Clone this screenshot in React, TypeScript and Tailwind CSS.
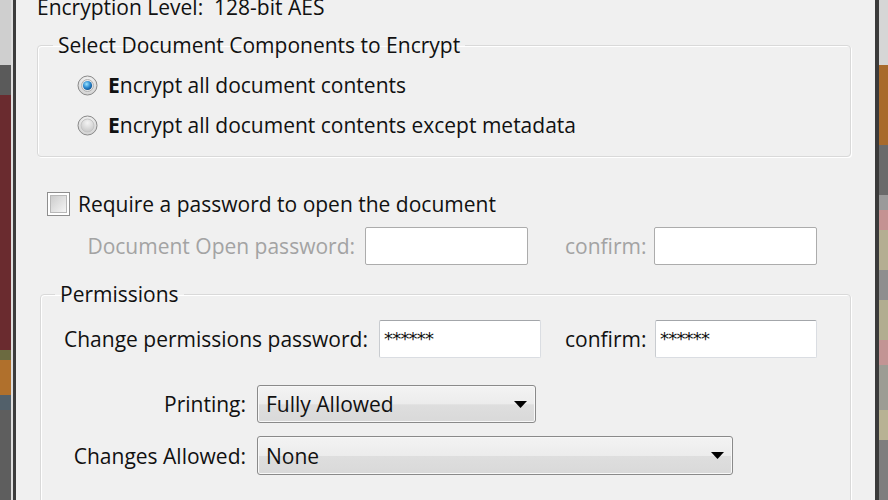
import React from 'react'

const LEFT_STRIP = [
  { h: 65, c: 'bg-[#cfcfcf]' },
  { h: 30, c: 'bg-[#5a5a5a]' },
  { h: 255, c: 'bg-[#6a2b2f]' },
  { h: 10, c: 'bg-[#6b6a40]' },
  { h: 35, c: 'bg-[#b0702c]' },
  { h: 15, c: 'bg-[#52606a]' },
  { h: 90, c: 'bg-[#5e5e5e]' },
]

const RIGHT_STRIP = [
  { h: 65, c: 'bg-[#d6d6d6]' },
  { h: 80, c: 'bg-[#a86a2c]' },
  { h: 50, c: 'bg-[#6a6a6a]' },
  { h: 15, c: 'bg-[#9a9a9a]' },
  { h: 20, c: 'bg-[#c49292]' },
  { h: 40, c: 'bg-[#b4ae92]' },
  { h: 30, c: 'bg-[#8e8e8e]' },
  { h: 40, c: 'bg-[#b2ad90]' },
  { h: 25, c: 'bg-[#c29494]' },
  { h: 45, c: 'bg-[#9c9c94]' },
  { h: 30, c: 'bg-[#b8b294]' },
  { h: 60, c: 'bg-[#7e7e7e]' },
]

function Radio({ checked }: { checked?: boolean }) {
  return (
    <svg width="21" height="21" viewBox="0 0 21 21" className="shrink-0">
      <defs>
        <radialGradient id={checked ? 'rgOn' : 'rgOff'} cx="50%" cy="35%" r="60%">
          <stop offset="0%" stopColor="#ffffff" />
          <stop offset="100%" stopColor="#d4d4d4" />
        </radialGradient>
        <radialGradient id="dot" cx="40%" cy="35%" r="70%">
          <stop offset="0%" stopColor="#9be4ff" />
          <stop offset="55%" stopColor="#2c8ad0" />
          <stop offset="100%" stopColor="#0d4d8a" />
        </radialGradient>
        <radialGradient id="inOff" cx="50%" cy="30%" r="70%">
          <stop offset="0%" stopColor="#f4f4f4" />
          <stop offset="100%" stopColor="#c8c8c8" />
        </radialGradient>
      </defs>
      <circle cx="10.5" cy="10.5" r="9.5" fill={`url(#${checked ? 'rgOn' : 'rgOff'})`} stroke="#8a8a8a" />
      {checked ? (
        <>
          <circle cx="10.5" cy="10.5" r="6" fill="#e8e8e8" stroke="#b0b0b0" />
          <circle cx="10.5" cy="10.5" r="4.6" fill="url(#dot)" />
        </>
      ) : (
        <circle cx="10.5" cy="10.5" r="6.5" fill="url(#inOff)" stroke="#c4c4c4" />
      )}
    </svg>
  )
}

function Checkbox() {
  return (
    <svg width="23" height="24" viewBox="0 0 23 24" className="shrink-0">
      <defs>
        <linearGradient id="cbIn" x1="0" y1="0" x2="1" y2="1">
          <stop offset="0%" stopColor="#cbcbcb" />
          <stop offset="100%" stopColor="#f6f6f6" />
        </linearGradient>
      </defs>
      <rect x="0.5" y="0.5" width="22" height="23" fill="#ffffff" stroke="#8e8e8e" />
      <rect x="3.5" y="3.5" width="16" height="17" fill="url(#cbIn)" stroke="#b8b8b8" />
    </svg>
  )
}

function Arrow() {
  return (
    <svg width="13" height="7" viewBox="0 0 13 7" className="shrink-0">
      <polygon points="0,0 13,0 6.5,7" fill="#000" />
    </svg>
  )
}

function Select({ value, width, height }: { value: string; width: string; height: string }) {
  return (
    <div className={`${width} ${height} shrink-0 rounded-[3px] border border-[#8a8a8a] bg-[linear-gradient(#f3f3f3_0%,#ececec_50%,#dedede_52%,#d9d9d9_100%)] flex items-center justify-between pl-[8px] pr-[8px] shadow-[inset_0_0_0_1px_#f8f8f8]`}>
      <span>{value}</span>
      <Arrow />
    </div>
  )
}

function PassBox({ filled }: { filled?: boolean }) {
  if (!filled) return <div className="w-[163px] h-[38px] shrink-0 bg-white border border-[#acacac] rounded-[2px]" />
  return (
    <div className="w-[162px] h-[38px] shrink-0 bg-white border border-[#dadde2] border-t-[#a3a6aa] border-l-[#c9ccd0] rounded-[2px] pl-[4px] pt-[9px] text-[#111] font-['DejaVu_Sans',sans-serif] text-[18px] leading-[18px] tracking-[-0.8px]">
      ******
    </div>
  )
}

export default function App() {
  return (
    <div className="w-[888px] h-[500px] overflow-hidden flex bg-[#f0f0f0] text-[#111] text-[21px] leading-[24px] font-['Open_Sans',sans-serif]">
      {/* desktop behind the dialog, left */}
      <div className="w-[11px] flex flex-col shrink-0">
        {LEFT_STRIP.map((s, i) => <div key={i} className={s.c} style={{ height: s.h }} />)}
      </div>
      <div className="w-[2px] bg-[#dedede] shrink-0" />
      <div className="w-[3px] bg-[#3c3c3c] shrink-0" />

      <div className="flex-1 min-w-0">
        <div className="mt-[-5px] ml-[21px]">Encryption Level:&nbsp; 128-bit AES</div>

        <fieldset className="ml-[21px] mt-[14px] w-[814px] rounded-[4px] border border-[#d9d9d9] shadow-[inset_1px_1px_0_#fff,1px_1px_0_#fff] pb-[11px]">
          <legend className="ml-[15px] px-[5px]">Select Document Components to Encrypt</legend>
          <div className="mt-[8px] pl-[39px]">
            <label className="h-[40px] flex items-center gap-[10px]">
              <Radio checked />
              <span><span className="font-bold">E</span>ncrypt all document contents</span>
            </label>
            <label className="h-[40px] flex items-center gap-[10px]">
              <Radio />
              <span><span className="font-bold">E</span>ncrypt all document contents except metadata</span>
            </label>
          </div>
        </fieldset>

        <label className="mt-[35px] ml-[31px] h-[24px] flex items-center gap-[8px]">
          <Checkbox />
          <span>Require a password to open the document</span>
        </label>

        <div className="mt-[11px] h-[38px] flex items-center text-[#a3a3a3]">
          <span className="w-[339px] shrink-0 text-right">Document Open password:</span>
          <div className="ml-[10px]"><PassBox /></div>
          <span className="ml-[37px] w-[89px] shrink-0">confirm:</span>
          <PassBox />
        </div>

        <fieldset className="ml-[24px] mt-[17px] w-[811px] rounded-[4px] border border-[#d9d9d9] shadow-[inset_1px_1px_0_#fff,1px_1px_0_#fff] pb-[40px]">
          <legend className="ml-[14px] px-[5px]">Permissions</legend>
          <div className="mt-[14px] h-[38px] flex items-center">
            <span className="ml-[23px] w-[315px] shrink-0">Change permissions password:</span>
            <PassBox filled />
            <span className="ml-[24px] w-[90px] shrink-0">confirm:</span>
            <PassBox filled />
          </div>
          <div className="mt-[27px] h-[38px] flex items-center">
            <span className="ml-[23px] w-[182px] shrink-0 text-right">Printing:</span>
            <div className="ml-[11px]">
              <Select value="Fully Allowed" width="w-[279px]" height="h-[38px]" />
            </div>
          </div>
          <div className="mt-[13px] h-[39px] flex items-center">
            <span className="ml-[23px] w-[182px] shrink-0 text-right">Changes Allowed:</span>
            <div className="ml-[11px]">
              <Select value="None" width="w-[476px]" height="h-[39px]" />
            </div>
          </div>
        </fieldset>
      </div>

      {/* desktop behind the dialog, right */}
      <div className="w-[4px] bg-[#3a3a3a] shrink-0" />
      <div className="w-[9px] flex flex-col shrink-0">
        {RIGHT_STRIP.map((s, i) => <div key={i} className={s.c} style={{ height: s.h }} />)}
      </div>
    </div>
  )
}
